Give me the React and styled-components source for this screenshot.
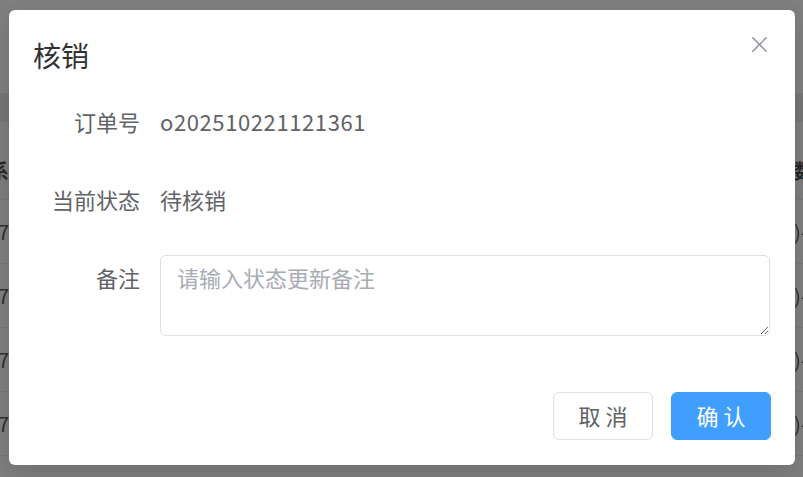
import React from "react";
import styled, { createGlobalStyle } from "styled-components";

const GlobalStyle = createGlobalStyle`
  html, body {
    margin: 0;
    padding: 0;
    overflow: hidden;
  }
  body {
    font-family: "Noto Sans CJK SC", "Noto Sans", sans-serif;
    background: #ffffff;
  }
`;

// background page (mostly hidden by the dialog)
const Page = styled.div`
  position: relative;
  width: 100vw;
  height: 100vh;
  overflow: hidden;
  background: #ffffff;
`;

const Toolbar = styled.div`
  height: 93px;
`;

const Band = styled.div`
  height: 29px;
  background: #ececec;
  border-top: 1px solid #ebeef5;
  border-bottom: 1px solid #ebeef5;
  box-sizing: border-box;
`;

const TableRow = styled.div`
  display: flex;
  height: ${(p) => p.$h}px;
  border-bottom: 1px solid #ebeef5;
  box-sizing: border-box;
  background: ${(p) => (p.$head ? "#fafafa" : "#ffffff")};
  color: ${(p) => (p.$head ? "#505050" : "#606266")};
  font-weight: ${(p) => (p.$head ? 700 : 400)};
  font-size: 20px;
  align-items: ${(p) => (p.$head ? "flex-end" : "center")};
  padding-bottom: ${(p) => (p.$head ? 14 : 0)}px;
`;

const EdgeCell = styled.div`
  width: 9px;
  overflow: hidden;
  white-space: nowrap;
  display: flex;
  justify-content: ${(p) => (p.$right ? "flex-start" : "flex-end")};
  margin-left: ${(p) => (p.$right ? "6px" : "0")};
`;

const Spacer = styled.div`
  flex: 1;
`;

const Overlay = styled.div`
  position: absolute;
  inset: 0;
  background: rgba(0, 0, 0, 0.5);
  display: flex;
  align-items: flex-start;
  padding: 10px 8px 0 9px;
`;

const Dialog = styled.div`
  position: relative;
  flex: 1;
  background: #ffffff;
  border-radius: 6px;
  box-shadow: 0 12px 32px 4px rgba(0, 0, 0, 0.04), 0 8px 20px rgba(0, 0, 0, 0.08);
  padding-bottom: 25px;
`;

const Header = styled.div`
  padding: 28px 24px 25px 24px;
`;

const Title = styled.span`
  font-size: 28px;
  line-height: 35px;
  padding-bottom: 1px;
  color: #303133;
  display: block;
`;

const CloseButton = styled.button`
  position: absolute;
  top: 22px;
  right: 23px;
  width: 25px;
  height: 25px;
  padding: 0;
  border: none;
  background: transparent;
  color: #909399;
  cursor: pointer;
  display: flex;
  align-items: center;
  justify-content: center;
  svg {
    width: 25px;
    height: 25px;
  }
`;

const Body = styled.div`
  padding: 0 25px 0 24px;
  display: flex;
  flex-direction: column;
  gap: 30px;
`;

const FormItem = styled.div`
  display: flex;
  align-items: flex-start;
`;

const Label = styled.label`
  width: 127px;
  height: 48px;
  flex-shrink: 0;
  box-sizing: border-box;
  padding-right: 20px;
  text-align: right;
  font-size: 22px;
  line-height: 45px;
  color: #606266;
`;

const Value = styled.div`
  flex: 1;
  height: 48px;
  font-size: 22px;
  line-height: 45px;
  color: #606266;
  letter-spacing: ${(p) => (p.$code ? "0.6px" : "0")};
`;

const TextArea = styled.textarea`
  flex: 1;
  height: 81px;
  box-sizing: border-box;
  border: 1px solid #dcdfe6;
  border-radius: 6px;
  padding: 6px 16px;
  font-family: "Noto Sans CJK SC", "Noto Sans", sans-serif;
  font-size: 22px;
  line-height: 1.45;
  color: #606266;
  outline: none;
  &::placeholder {
    color: #a8abb2;
  }
`;

const Footer = styled.div`
  display: flex;
  justify-content: flex-end;
  gap: 18px;
  padding: 56px 24px 0 0;
`;

const Button = styled.button`
  width: 100px;
  height: 48px;
  padding: 0 0 2px;
  border-radius: 6px;
  font-family: "Noto Sans CJK SC", "Noto Sans", sans-serif;
  font-size: 22px;
  cursor: pointer;
  border: 1px solid ${(p) => (p.$primary ? "#409eff" : "#dcdfe6")};
  background: ${(p) => (p.$primary ? "#409eff" : "#ffffff")};
  color: ${(p) => (p.$primary ? "#ffffff" : "#606266")};
`;

const CloseIcon = () => (
  <svg viewBox="0 0 1024 1024" fill="currentColor">
    <path d="M764.288 214.592 512 466.88 259.712 214.592a31.936 31.936 0 0 0-45.12 45.12L466.752 512 214.528 764.224a31.936 31.936 0 1 0 45.12 45.184L512 557.184l252.288 252.288a31.936 31.936 0 0 0 45.12-45.12L557.12 512.064l252.288-252.352a31.936 31.936 0 1 0-45.12-45.184z" />
  </svg>
);

const rows = [1, 2, 3, 4];

export default function App() {
  return (
    <Page>
      <GlobalStyle />
      <Toolbar />
      <Band />
      <TableRow $h={78} $head>
        <EdgeCell>联系</EdgeCell>
        <Spacer />
        <EdgeCell $right>数量</EdgeCell>
      </TableRow>
      {rows.map((r) => (
        <TableRow key={r} $h={64}>
          <EdgeCell>137</EdgeCell>
          <Spacer />
          <EdgeCell $right>)-</EdgeCell>
        </TableRow>
      ))}

      <Overlay>
        <Dialog>
          <Header>
            <Title>核销</Title>
          </Header>
          <CloseButton aria-label="关闭">
            <CloseIcon />
          </CloseButton>
          <Body>
            <FormItem>
              <Label>订单号</Label>
              <Value $code>o202510221121361</Value>
            </FormItem>
            <FormItem>
              <Label>当前状态</Label>
              <Value>待核销</Value>
            </FormItem>
            <FormItem>
              <Label>备注</Label>
              <TextArea placeholder="请输入状态更新备注" />
            </FormItem>
          </Body>
          <Footer>
            <Button>取 消</Button>
            <Button $primary>确 认</Button>
          </Footer>
        </Dialog>
      </Overlay>
    </Page>
  );
}
